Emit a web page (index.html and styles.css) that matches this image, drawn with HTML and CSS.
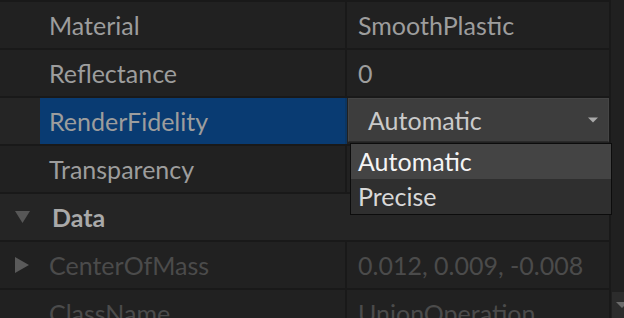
FILE: index.html
```html
<!DOCTYPE html>
<html>
<head>
<meta charset="utf-8">
<link rel="stylesheet" href="styles.css">
</head>
<body>
<div class="panel">
  <div class="list">
    <div class="row">
      <div class="indent"></div>
      <div class="label">Material</div>
      <div class="value">SmoothPlastic</div>
    </div>
    <div class="row">
      <div class="indent"></div>
      <div class="label">Reflectance</div>
      <div class="value">0</div>
    </div>
    <div class="row selected">
      <div class="indent"></div>
      <div class="label">RenderFidelity</div>
      <div class="value">
        <div class="select">
          <span>Automatic</span>
          <svg class="caret" width="10" height="6" viewBox="0 0 10 6"><path d="M0 0.5H10L5 5.5Z" fill="#a9a9a9"/></svg>
        </div>
      </div>
    </div>
    <div class="row">
      <div class="indent"></div>
      <div class="label">Transparency</div>
      <div class="value"></div>
    </div>
    <div class="row section">
      <div class="indent">
        <svg width="17" height="14" viewBox="0 0 17 14"><path d="M1 1H16L8.5 13Z" fill="#575757"/></svg>
      </div>
      <div class="label">Data</div>
    </div>
    <div class="row dim">
      <div class="indent">
        <svg width="16" height="18" viewBox="0 0 16 18"><path d="M1 1L15 9L1 17Z" fill="#5a5a5a"/></svg>
      </div>
      <div class="label">CenterOfMass</div>
      <div class="value">0.012, 0.009, -0.008</div>
    </div>
    <div class="row dim">
      <div class="indent"></div>
      <div class="label">ClassName</div>
      <div class="value">UnionOperation</div>
    </div>

    <div class="popup">
      <div class="option hot">Automatic</div>
      <div class="option">Precise</div>
    </div>
  </div>
  <div class="scrollbar">
    <div class="scroll-btn">
      <svg width="12" height="8" viewBox="0 0 12 8"><path d="M0 1H12L6 7Z" fill="#6a6a6a"/></svg>
    </div>
  </div>
</div>
</body>
</html>
```

FILE: styles.css
```css
html, body {
  margin: 0;
  padding: 0;
  background: #212121;
}
body {
  width: 624px;
  height: 318px;
  overflow: hidden;
  font-family: Lato, "Noto Sans", sans-serif;
  font-size: 25px;
}
.panel {
  display: flex;
  width: 624px;
  height: 318px;
}
.list {
  position: relative;
  width: 609px;
  border-right: 2px solid #191919;
  display: flex;
  flex-direction: column;
  flex: none;
}
.row {
  display: flex;
  flex: none;
  height: 46px;
  border-top: 2px solid #191919;
  background: #212121;
  color: #9d9d9d;
}
.indent {
  width: 40px;
  flex: none;
  display: flex;
  align-items: center;
  justify-content: center;
  padding-left: 4px;
  box-sizing: border-box;
}
.label {
  width: 307px;
  flex: none;
  box-sizing: border-box;
  padding-left: 9px;
  line-height: 46px;
  border-right: 2px solid #191919;
  white-space: nowrap;
}
.value {
  flex: 1;
  padding-left: 11px;
  line-height: 46px;
  white-space: nowrap;
  overflow: hidden;
}
.selected .indent {
  background: #252525;
}
.selected .label {
  background: #093b72;
  border-right-color: #0c3560;
}
.selected .value {
  padding: 0 0 1px 1px;
}
.select {
  height: 44px;
  box-sizing: border-box;
  background: #3d3d3d;
  border: 1px solid #454545;
  border-bottom-color: #2a2a2a;
  display: flex;
  align-items: center;
  justify-content: space-between;
  padding: 0 10px 0 19px;
  color: #cacaca;
}
.section {
  background: #252525;
}
.section .label {
  border-right: none;
  font-weight: bold;
  color: #a9a9a9;
  padding-left: 12px;
}
.dim {
  color: #4b4b4b;
}
.dim .indent {
  padding-left: 3px;
}
.popup {
  position: absolute;
  left: 350px;
  top: 143px;
  width: 260px;
  border: 1px solid #0c0c0c;
  background: #2f2f2f;
}
.option {
  height: 35px;
  line-height: 35px;
  padding-left: 7px;
  color: #d8d8d8;
}
.option.hot {
  background: #444444;
  color: #f4f4f4;
}
.scrollbar {
  flex: 1;
  background: #202020;
  display: flex;
  flex-direction: column;
  justify-content: flex-end;
}
.scroll-btn {
  height: 26px;
  margin-left: 1px;
  background: #2c2c2c;
  display: flex;
  align-items: center;
  justify-content: flex-end;
  overflow: hidden;
}
.scroll-btn svg {
  margin-right: -4px;
}
```
